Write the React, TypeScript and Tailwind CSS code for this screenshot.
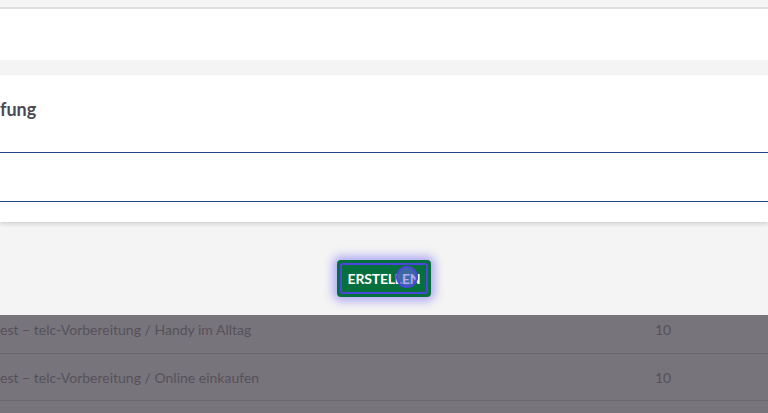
export default function App() {
  const rows = [
    { title: 'est – telc-Vorbereitung / Handy im Alltag', count: 10 },
    { title: 'est – telc-Vorbereitung / Online einkaufen', count: 10 },
  ];

  return (
    <div
      className="w-[768px] h-[413px] overflow-hidden bg-[#f4f4f4]"
      style={{ fontFamily: 'Lato, "Open Sans", sans-serif' }}
    >
      <div className="h-[7px] bg-[#f5f5f5]" />
      <div className="h-[53px] bg-white border-t-2 border-[#dedede]" />
      <div className="h-[15px]" />

      <div className="relative bg-white shadow-[0_2px_4px_rgba(0,0,0,0.15)]">
        <div className="pt-[22px] h-[70px]">
          <h2 className="text-[18px] font-bold text-[#4a4a55] leading-[24px]">fung</h2>
        </div>
        <div className="h-[7px]" />
        <input
          className="block w-full h-[50px] border-y border-[#1f4686] outline-none bg-white"
          type="text"
        />
        <div className="h-[20px]" />
      </div>

      <div className="h-[93px] flex justify-center pt-[38px]">
        <button className="relative h-[37px] w-[94px] rounded-[4px] bg-[#05703e] p-[3px] shadow-[0_0_10px_4px_rgba(90,80,240,0.45)]">
          <span className="flex h-full w-full items-center justify-center rounded-[3px] border-2 border-[#4c46dc] text-[14px] font-bold tracking-[-0.2px] text-white">
            ERSTELLEN
          </span>
          <span className="absolute left-[59px] top-[6px] h-[22px] w-[22px] rounded-full border-2 border-[#4c46dc] bg-[rgba(110,100,240,0.55)]" />
        </button>
      </div>

      <div className="h-[98px] bg-[#78747b] text-[14px] text-[#55515a]">
        {rows.map((row, i) => (
          <div
            key={i}
            className={`flex items-center border-b border-[#6c686f] ${i === 0 ? 'h-[39px] pb-[10px]' : 'h-[47px]'}`}
          >
            <span className="w-[655px] whitespace-nowrap">{row.title}</span>
            <span className="text-[14px]">{row.count}</span>
          </div>
        ))}
      </div>
    </div>
  );
}
